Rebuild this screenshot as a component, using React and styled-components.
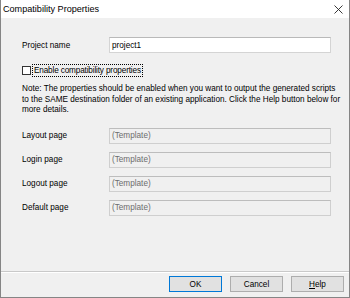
import React from 'react'
import styled, { createGlobalStyle } from 'styled-components'

const GlobalStyle = createGlobalStyle`
  html, body {
    margin: 0;
    padding: 0;
    background: #f0f0f0;
  }
  * {
    box-sizing: border-box;
  }
`

const Window = styled.div`
  display: flex;
  flex-direction: column;
  width: 350px;
  height: 298px;
  border: 1px solid #858585;
  border-top: none;
  background: #f0f0f0;
  font-family: 'Liberation Sans', Arial, sans-serif;
  font-size: 8.2px;
  color: #000;
  overflow: hidden;
`

const TitleBar = styled.div`
  display: flex;
  align-items: center;
  justify-content: space-between;
  height: 18px;
  padding: 0 6px 0 2px;
  background: #fff;
  font-size: 9.1px;
`

const CloseIcon = () => (
  <svg width="9" height="9" viewBox="0 0 9 9">
    <path d="M0.5 0.5 L8.5 8.5 M8.5 0.5 L0.5 8.5" stroke="#222" strokeWidth="0.9" fill="none" />
  </svg>
)

const Body = styled.div`
  flex: 1;
  display: flex;
  flex-direction: column;
  padding: 19px 18px 0 20px;
`

const FieldRow = styled.div`
  display: grid;
  grid-template-columns: 88px 1fr;
  align-items: center;
`

const Label = styled.span`
  padding-left: 1px;
  white-space: nowrap;
`

const TextBox = styled.div`
  height: 16px;
  display: flex;
  align-items: center;
  padding-left: 2px;
  border: 1px solid ${p => (p.$disabled ? '#cfcfcf' : '#d4d4d4')};
  border-top-color: ${p => (p.$disabled ? '#bdbdbd' : '#b9b9b9')};
  background: ${p => (p.$disabled ? '#f0f0f0' : '#fff')};
  color: ${p => (p.$disabled ? '#6d6d6d' : '#000')};
  white-space: nowrap;
`

const CheckRow = styled.label`
  display: flex;
  align-items: center;
  gap: 2px;
  margin-top: 11px;
  height: 13px;
`

const CheckBox = styled.span`
  width: 9px;
  height: 9px;
  margin-left: 1px;
  border: 1px solid #333;
  background: #fff;
`

const FocusText = styled.span`
  padding: 0 1px;
  line-height: 11px;
  outline: 1px dotted #000;
  outline-offset: 0;
  white-space: nowrap;
  letter-spacing: -0.15px;
`

const Note = styled.p`
  margin: 7px -10px 0 1px;
  line-height: 10.5px;
  white-space: nowrap;
`

const Fields = styled.div`
  display: flex;
  flex-direction: column;
  gap: 8px;
  margin-top: 12px;
`

const Footer = styled.div`
  display: flex;
  justify-content: flex-end;
  gap: 8px;
  height: 26px;
  padding: 4px 5px 0 0;
  border-top: 1px solid #c9c9c9;
  box-shadow: inset 0 1px 0 #fff;
`

const Button = styled.button`
  width: 53px;
  height: 16px;
  padding: 0;
  font: inherit;
  color: #000;
  background: #e1e1e1;
  border: 1px solid ${p => (p.$primary ? '#0078d7' : '#adadad')};
  box-shadow: ${p => (p.$primary ? 'inset 0 0 0 1px #e1e1e1' : 'none')};
`

const pages = ['Layout page', 'Login page', 'Logout page', 'Default page']

export default function App() {
  return (
    <>
      <GlobalStyle />
      <Window>
        <TitleBar>
          <span>Compatibility Properties</span>
          <CloseIcon />
        </TitleBar>
        <Body>
          <FieldRow>
            <Label>Project name</Label>
            <TextBox>project1</TextBox>
          </FieldRow>
          <CheckRow>
            <CheckBox />
            <FocusText>Enable compatibility properties</FocusText>
          </CheckRow>
          <Note>
            Note: The properties should be enabled when you want to output the generated scripts
            <br />
            to the SAME destination folder of an existing application. Click the Help button below for
            <br />
            more details.
          </Note>
          <Fields>
            {pages.map(p => (
              <FieldRow key={p}>
                <Label>{p}</Label>
                <TextBox $disabled>(Template)</TextBox>
              </FieldRow>
            ))}
          </Fields>
        </Body>
        <Footer>
          <Button $primary>OK</Button>
          <Button>Cancel</Button>
          <Button>
            <u>H</u>elp
          </Button>
        </Footer>
      </Window>
    </>
  )
}
